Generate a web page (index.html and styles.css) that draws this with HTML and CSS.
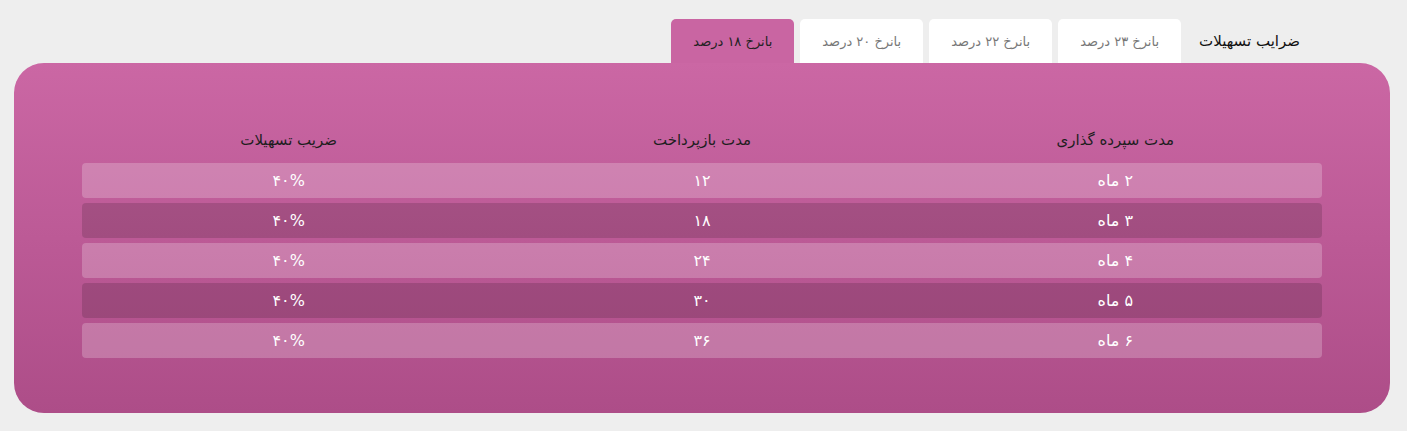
FILE: index.html
```html
<!DOCTYPE html>
<html lang="fa" dir="rtl">
<head>
    <meta charset="UTF-8">
    <title>ضرایب تسهیلات</title>
    <link rel="stylesheet" href="styles.css">
</head>
<body>

    <div class="tabs">
        <span class="tabs-label">ضرایب تسهیلات</span>
        <span class="tab">بانرخ ۲۳ درصد</span>
        <span class="tab">بانرخ ۲۲ درصد</span>
        <span class="tab">بانرخ ۲۰ درصد</span>
        <span class="tab active">بانرخ ۱۸ درصد</span>
    </div>

    <div class="panel">
        <div class="rates">
            <div class="rates-head">
                <span>مدت سپرده گذاری</span>
                <span>مدت بازپرداخت</span>
                <span>ضریب تسهیلات</span>
            </div>
            <div class="rates-row light">
                <span>۲ ماه</span><span>۱۲</span><span>۴۰%</span>
            </div>
            <div class="rates-row dark">
                <span>۳ ماه</span><span>۱۸</span><span>۴۰%</span>
            </div>
            <div class="rates-row light">
                <span>۴ ماه</span><span>۲۴</span><span>۴۰%</span>
            </div>
            <div class="rates-row dark">
                <span>۵ ماه</span><span>۳۰</span><span>۴۰%</span>
            </div>
            <div class="rates-row light">
                <span>۶ ماه</span><span>۳۶</span><span>۴۰%</span>
            </div>
        </div>
    </div>

</body>
</html>
```

FILE: styles.css
```css
body {
    margin: 0;
    background-color: #eeeeee;
    font-family: 'DejaVu Sans', 'Noto Sans', sans-serif;
    color: #222222;
}
.tabs {
    display: flex;
    gap: 6px;
    padding: 19px 87px 0 0;
    height: 44px;
}
.tabs-label,
.tab {
    display: flex;
    align-items: center;
    padding: 0 22px;
    font-size: 13px;
    border-radius: 5px 5px 0 0;
}
.tabs-label {
    color: #111111;
    font-size: 15px;
    padding: 0 20px 0 16px;
    margin-left: -4px;
}
.tab {
    background-color: #ffffff;
    color: #777777;
}
.tab.active {
    background-color: #c965a2;
    color: #222222;
}
.panel {
    margin: 0 17px 0 14px;
    height: 350px;
    box-sizing: border-box;
    border-radius: 30px;
    background: linear-gradient(to bottom, #cb67a4, #ad4d88);
    padding: 68px 68px 0;
}
.rates {
    display: flex;
    flex-direction: column;
    gap: 5px;
}
.rates-head,
.rates-row {
    display: grid;
    grid-template-columns: 1fr 1fr 1fr;
    text-align: center;
}
.rates-head {
    font-size: 15px;
    color: #1e1e1e;
    height: 27px;
}
.rates-row {
    height: 35px;
    align-items: center;
    border-radius: 4px;
    color: #ffffff;
    font-size: 16px;
}
.rates-row.light {
    background-color: rgba(255, 255, 255, 0.22);
}
.rates-row.dark {
    background-color: rgba(0, 0, 0, 0.14);
}
```
